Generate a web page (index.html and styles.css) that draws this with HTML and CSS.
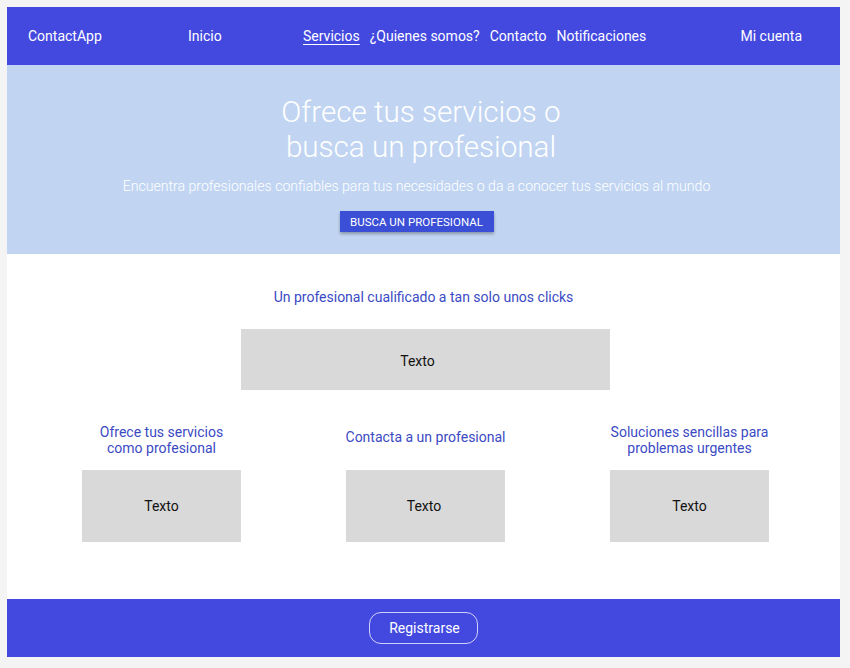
FILE: index.html
```html
<!DOCTYPE html>
<html lang="es">
<head>
<meta charset="utf-8">
<title>ContactApp</title>
<link rel="stylesheet" href="styles.css">
</head>
<body>
<div class="frame">
  <nav class="nav">
    <span class="brand">ContactApp</span>
    <a class="link inicio">Inicio</a>
    <div class="group">
      <a class="link active">Servicios</a>
      <a class="link">¿Quienes somos?</a>
      <a class="link">Contacto</a>
      <a class="link">Notificaciones</a>
    </div>
    <a class="link account">Mi cuenta</a>
  </nav>
  <header class="hero">
    <h1 class="hero-title">Ofrece tus servicios o<br>busca un profesional</h1>
    <p class="hero-sub">Encuentra profesionales confiables para tus necesidades o da a conocer tus servicios al mundo</p>
    <button class="hero-btn">BUSCA UN PROFESIONAL</button>
  </header>
  <main class="main">
    <h2 class="section-title">Un profesional cualificado a tan solo unos clicks</h2>
    <div class="box big">Texto</div>
    <div class="cols">
      <div class="col">
        <h3 class="col-title">Ofrece tus servicios<br>como profesional</h3>
        <div class="box small">Texto</div>
      </div>
      <div class="col">
        <h3 class="col-title single">Contacta a un profesional</h3>
        <div class="box small mid">Texto</div>
      </div>
      <div class="col">
        <h3 class="col-title">Soluciones sencillas para<br>problemas urgentes</h3>
        <div class="box small">Texto</div>
      </div>
    </div>
  </main>
  <footer class="footer">
    <button class="register">Registrarse</button>
  </footer>
</div>
</body>
</html>
```

FILE: styles.css
```css
* { box-sizing: border-box; }
html, body { margin: 0; padding: 0; }
body {
  background: #f4f4f4;
  font-family: Roboto, "Noto Sans", sans-serif;
  padding: 7px 10px 11px 7px;
}
.frame {
  width: 833px;
  height: 650px;
  background: #ffffff;
  display: flex;
  flex-direction: column;
}
.nav {
  height: 58px;
  flex: none;
  background: #4349df;
  color: #ffffff;
  display: flex;
  align-items: center;
  padding: 0 38px 0 21px;
  font-size: 14px;
}
.brand { width: 73px; white-space: nowrap; }
.link { color: #fff; white-space: nowrap; }
.inicio { margin-left: 87px; width: 33px; }
.group { display: flex; gap: 10px; margin-left: 82px; }
.active { text-decoration: underline; text-underline-offset: 3px; }
.account { margin-left: auto; }

.hero {
  height: 189px;
  flex: none;
  background: #c1d5f2;
  display: flex;
  flex-direction: column;
  align-items: center;
  padding: 30px 14px 0 0;
  color: #ffffff;
}
.hero-title {
  margin: 0 0 0 9px;
  font-weight: 300;
  font-size: 29.6px;
  line-height: 35px;
  text-align: center;
}
.hero-sub {
  margin: 11px 0 0;
  font-size: 14.1px;
  font-weight: 300;
  line-height: 20px;
}
.hero-btn {
  margin-top: 15px;
  width: 154px;
  height: 21px;
  background: #3b4fd6;
  color: #fff;
  border: none;
  font-family: inherit;
  font-size: 11.5px;
  padding: 0;
  box-shadow: 0 2px 3px rgba(0,0,0,0.3);
}

.main {
  flex: 1;
  display: flex;
  flex-direction: column;
  align-items: center;
  padding: 33px 0 0 4px;
}
.section-title {
  margin: 0 4px 0 0;
  font-size: 14px;
  font-weight: 400;
  line-height: 20px;
  color: #3b4ac4;
}
.box {
  background: #d9d9d9;
  color: #111;
  font-size: 14px;
  display: flex;
  align-items: center;
  justify-content: center;
}
.big { width: 369px; height: 61px; margin-top: 22px; padding: 3px 16px 0 0; }
.cols {
  display: grid;
  grid-template-columns: repeat(3, 159px);
  column-gap: 105px;
  margin-top: 34px;
}
.col { display: flex; flex-direction: column; align-items: center; }
.col-title {
  margin: 0;
  height: 32px;
  display: flex;
  align-items: center;
  text-align: center;
  white-space: nowrap;
  font-size: 14px;
  font-weight: 400;
  line-height: 16px;
  color: #3b4ac4;
}
.col-title.single { padding-bottom: 6px; }
.small { width: 159px; height: 72px; margin-top: 14px; }
.small.mid { padding-right: 3px; }

.footer {
  height: 58px;
  flex: none;
  background: #4349df;
  display: flex;
  align-items: center;
  justify-content: center;
}
.register {
  width: 109px;
  height: 32px;
  background: transparent;
  border: 1px solid rgba(255,255,255,0.75);
  border-radius: 12px;
  color: #fff;
  font-family: inherit;
  font-size: 14px;
  padding: 0 0 0 2px;
}
```
